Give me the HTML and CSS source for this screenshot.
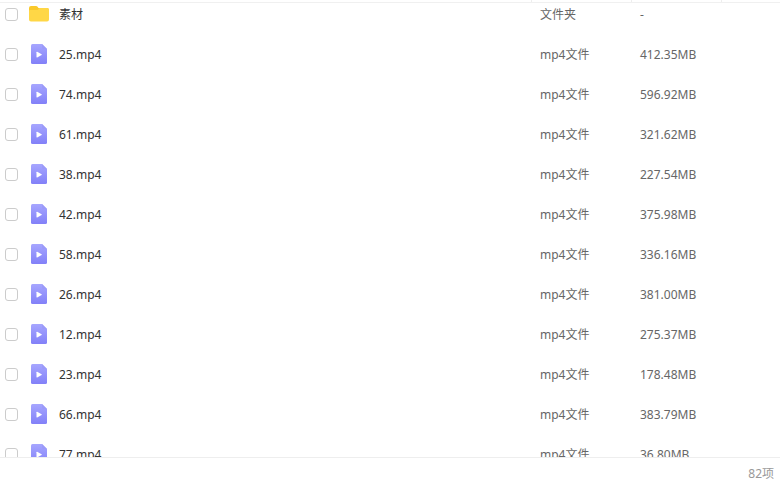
FILE: index.html
```
<!DOCTYPE html>
<html lang="zh-CN">
<head>
<meta charset="utf-8">
<title>文件列表</title>
<link rel="stylesheet" href="styles.css">
</head>
<body>

<svg class="defs" aria-hidden="true">
	<linearGradient id="violet" x1="0" y1="0" x2="0" y2="1">
		<stop offset="0" stop-color="#a6a6ff"/>
		<stop offset="1" stop-color="#8280f8"/>
	</linearGradient>
	<symbol id="folder" viewBox="0 0 20 16">
		<path d="M0 2Q0 0 2 0H7Q8 0 8.600 .8L9.500 2H18Q20 2 20 4V10H0Z" fill="#fac92a"/>
		<path d="M0 5Q0 4 1 4H8Q9 4 9.500 3.200Q10 2 11 2H18Q20 2 20 4V13.500Q20 15.500 18 15.500H2Q0 15.500 0 13.500Z" fill="#ffd746"/>
	</symbol>
	<symbol id="video" viewBox="0 0 16 20">
		<path d="M1.500 0H11L16 5V18.500Q16 20 14.500 20H1.500Q0 20 0 18.500V1.500Q0 0 1.500 0Z" fill="url(#violet)"/>
		<path d="M11 0L16 5H12.500Q11 5 11 3.500Z" fill="#9b9af8"/>
		<path d="M5.500 8.200Q5.500 7.500 6.200 7.800L10.600 10.200Q11.200 10.600 10.600 11L6.200 13.400Q5.500 13.700 5.500 13Z" fill="#fff"/>
	</symbol>
</svg>

<div class="head"><span class="name"></span><span class="type"></span><span class="size"></span><span class="rest"></span></div>

<div class="list">
<table class="files">
<colgroup><col class="c-check"><col class="c-icon"><col><col class="c-type"><col class="c-size"></colgroup>
<tbody>
<tr><td><input type="checkbox" id="f0"></td>
	<td><svg class="folder"><use href="#folder"/></svg></td>
	<td class="text"><label for="f0">素材</label></td><td class="text info">文件夹</td><td class="text info">-</td></tr>
<tr><td><input type="checkbox" id="f1"></td>
	<td><svg class="video"><use href="#video"/></svg></td>
	<td class="text"><label for="f1">25.mp4</label></td><td class="text info">mp4文件</td><td class="text info">412.35MB</td></tr>
<tr><td><input type="checkbox" id="f2"></td>
	<td><svg class="video"><use href="#video"/></svg></td>
	<td class="text"><label for="f2">74.mp4</label></td><td class="text info">mp4文件</td><td class="text info">596.92MB</td></tr>
<tr><td><input type="checkbox" id="f3"></td>
	<td><svg class="video"><use href="#video"/></svg></td>
	<td class="text"><label for="f3">61.mp4</label></td><td class="text info">mp4文件</td><td class="text info">321.62MB</td></tr>
<tr><td><input type="checkbox" id="f4"></td>
	<td><svg class="video"><use href="#video"/></svg></td>
	<td class="text"><label for="f4">38.mp4</label></td><td class="text info">mp4文件</td><td class="text info">227.54MB</td></tr>
<tr><td><input type="checkbox" id="f5"></td>
	<td><svg class="video"><use href="#video"/></svg></td>
	<td class="text"><label for="f5">42.mp4</label></td><td class="text info">mp4文件</td><td class="text info">375.98MB</td></tr>
<tr><td><input type="checkbox" id="f6"></td>
	<td><svg class="video"><use href="#video"/></svg></td>
	<td class="text"><label for="f6">58.mp4</label></td><td class="text info">mp4文件</td><td class="text info">336.16MB</td></tr>
<tr><td><input type="checkbox" id="f7"></td>
	<td><svg class="video"><use href="#video"/></svg></td>
	<td class="text"><label for="f7">26.mp4</label></td><td class="text info">mp4文件</td><td class="text info">381.00MB</td></tr>
<tr><td><input type="checkbox" id="f8"></td>
	<td><svg class="video"><use href="#video"/></svg></td>
	<td class="text"><label for="f8">12.mp4</label></td><td class="text info">mp4文件</td><td class="text info">275.37MB</td></tr>
<tr><td><input type="checkbox" id="f9"></td>
	<td><svg class="video"><use href="#video"/></svg></td>
	<td class="text"><label for="f9">23.mp4</label></td><td class="text info">mp4文件</td><td class="text info">178.48MB</td></tr>
<tr><td><input type="checkbox" id="f10"></td>
	<td><svg class="video"><use href="#video"/></svg></td>
	<td class="text"><label for="f10">66.mp4</label></td><td class="text info">mp4文件</td><td class="text info">383.79MB</td></tr>
<tr><td><input type="checkbox" id="f11"></td>
	<td><svg class="video"><use href="#video"/></svg></td>
	<td class="text"><label for="f11">77.mp4</label></td><td class="text info">mp4文件</td><td class="text info">36.80MB</td></tr>
</tbody>
</table>
</div>

<footer class="foot">82项</footer>

</body>
</html>
```
FILE: styles.css
```
body {
	margin: 0;
	height: 100vh;
	display: flex;
	flex-direction: column;
	background: #fff;
	color: #333;
	font: 12px/18px "Noto Sans", "Noto Sans CJK SC", sans-serif;
}
.defs { position: absolute; width: 0; height: 0; }

/* bottom edge of the column header */
.head { display: flex; flex: none; height: 2px; border-bottom: 1px solid #f0f0f0; }
.head span { box-sizing: border-box; border-right: 1px solid #eee; }
.head .name { flex: 1; }
.head .type { width: 100px; }
.head .size { width: 90px; }
.head .rest { width: 58px; border-right: none; }

/* the list is scrolled a little under the header */
.list { flex: 1; min-height: 0; overflow: hidden; }
.files { width: 100%; margin-top: -9px; table-layout: fixed; border-collapse: collapse; }
.files td { box-sizing: border-box; height: 40px; padding: 0; }
.files .text { padding-top: 2px; }
.c-check { width: 29px; }
.c-icon { width: 30px; }
.c-type { width: 100px; }
.c-size { width: 140px; }
.info { color: #666; }

.files svg { display: block; }
.folder { width: 20px; height: 16px; }
.video { width: 16px; height: 20px; margin-left: 2px; }

input[type=checkbox] {
	appearance: none;
	display: block;
	box-sizing: border-box;
	width: 13px;
	height: 13px;
	margin: 0 0 0 5px;
	border: 1px solid #ccc;
	border-radius: 3px;
	background: #fff;
}
input[type=checkbox]:checked { background: #8280f8; border-color: #8280f8; }

.foot {
	flex: none;
	padding: 7px 6px 4px;
	border-top: 1px solid #eee;
	color: #999;
	text-align: right;
}
```
